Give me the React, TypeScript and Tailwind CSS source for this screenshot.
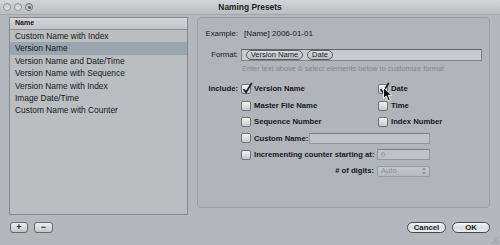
import React from "react"

const rows = [
  "Custom Name with Index",
  "Version Name",
  "Version Name and Date/Time",
  "Version Name with Sequence",
  "Version Name with Index",
  "Image Date/Time",
  "Custom Name with Counter",
]

function Check({ on, cursor }: { on?: boolean; cursor?: boolean }) {
  return (
    <span className="relative block w-[10px] h-[10px] shrink-0 rounded-[2px] border border-[#6f7377] bg-gradient-to-b from-[#f4f4f4] to-[#c6c8ca]">
      {on && (
        <svg className="absolute left-[0px] top-[-3px]" width="11" height="12" viewBox="0 0 11 12">
          <path d="M1.5 7.2 L4 10.2 L9.8 1" stroke="#1d1f22" strokeWidth="1.7" fill="none" />
        </svg>
      )}
      {cursor && (
        <svg className="absolute left-[4px] top-[2px]" width="10" height="15" viewBox="0 0 10 15">
          <path d="M0.5 0.5 L0.5 11.5 L3.2 9 L5.2 13.8 L7.2 12.9 L5.3 8.3 L8.8 8.3 Z" fill="#111" stroke="#fff" strokeWidth="0.9" />
        </svg>
      )}
    </span>
  )
}

function Pill({ children, w }: { children: React.ReactNode; w: string }) {
  return (
    <span className={`${w} h-[10px] flex items-center justify-center rounded-full border border-[#5d6064] bg-gradient-to-b from-[#dcdee0] to-[#b9bcbf] text-[7.6px] leading-none text-[#222]`}>
      {children}
    </span>
  )
}

export default function App() {
  return (
    <div className="relative w-[500px] h-[245px] overflow-hidden bg-[#b4b7bb] flex flex-col font-['Liberation_Sans',Arial,sans-serif] text-[#15171a]">
      {/* title bar */}
      <div className="h-[15px] flex items-center px-[3px] bg-gradient-to-b from-[#d3d5d7] to-[#babdc0] border-b border-[#a4a7aa]">
        <div className="w-[40px] flex gap-[3px]">
          <span className="w-[8px] h-[8px] rounded-full border border-[#8d9094] bg-gradient-to-b from-[#c9cbcd] to-[#e4e5e6]" />
          <span className="w-[8px] h-[8px] rounded-full border border-[#8d9094] bg-gradient-to-b from-[#c9cbcd] to-[#e4e5e6]" />
          <span className="w-[8px] h-[8px] rounded-full border border-[#6d7074] bg-gradient-to-b from-[#b9bbbd] to-[#dadbdc] flex items-center justify-center">
            <span className="w-[3px] h-[3px] rounded-full bg-[#555]" />
          </span>
        </div>
        <div className="flex-1 text-center text-[8.4px] font-bold text-[#1d1f22] leading-none">Naming Presets</div>
        <div className="w-[40px]" />
      </div>

      <div className="flex flex-1 pl-[9px] pt-[2px] gap-[9px]">
        {/* left column */}
        <div className="w-[179px] flex flex-col">
          <div className="h-[198px] border border-[#85888c] bg-[#bbbec1]">
            <div className="h-[12px] flex items-center pl-[5px] text-[7px] font-bold bg-gradient-to-b from-[#d4d6d8] to-[#c2c5c8] border-b border-[#8d9094]">
              Name
            </div>
            {rows.map((r, i) => (
              <div
                key={r}
                className={`h-[12.4px] flex items-center pl-[5px] text-[8.4px] leading-none ${i === 1 ? "bg-[#9aa5b0]" : ""}`}
              >
                {r}
              </div>
            ))}
          </div>
          <div className="mt-[7px] flex gap-[6px] pl-[1px]">
            <button className="w-[18px] h-[11px] rounded-[3px] border border-[#66696d] bg-gradient-to-b from-[#f0f0f0] to-[#c2c4c6] flex items-center justify-center text-[9px] font-bold leading-none text-[#222]">
              +
            </button>
            <button className="w-[19px] h-[11px] rounded-[3px] border border-[#66696d] bg-gradient-to-b from-[#f0f0f0] to-[#c2c4c6] flex items-center justify-center text-[9px] font-bold leading-none text-[#222]">
              −
            </button>
          </div>
        </div>

        {/* right column */}
        <div className="w-[293px] flex flex-col">
          <div className="h-[191px] rounded-[4px] border border-[#9b9fa3] bg-[#b1b5b9] flex flex-col pt-[10px] text-[8px] leading-none">
            <div className="h-[12px] flex items-center">
              <span className="w-[40px] text-right text-[7.8px]">Example:</span>
              <span className="ml-[6px]">[Name] 2006-01-01</span>
            </div>
            <div className="mt-[9px] h-[12px] flex items-center">
              <span className="w-[40px] text-right text-[7.8px]">Format:</span>
              <div className="ml-[3px] w-[241px] h-[12px] border border-[#7e8286] border-t-[#606367] bg-[#c8cbce] flex items-center pl-[4px] gap-[4px]">
                <Pill w="w-[57px]">Version Name</Pill>
                <Pill w="w-[26px]">Date</Pill>
              </div>
            </div>
            <div className="mt-[3px] h-[10px] flex items-center pl-[44px] text-[7.4px] text-[#85898d]">
              Enter text above &amp; select elements below to customize format
            </div>

            <div className="mt-[7px] flex flex-col font-bold text-[7.7px]">
              <div className="h-[16.4px] flex items-center">
                <span className="w-[40px] text-right">Include:</span>
                <div className="ml-[3px] w-[137px] flex items-center gap-[3px]">
                  <Check on />
                  <span>Version Name</span>
                </div>
                <div className="flex items-center gap-[3px]">
                  <Check on cursor />
                  <span>Date</span>
                </div>
              </div>
              <div className="h-[16.4px] flex items-center">
                <span className="w-[40px]" />
                <div className="ml-[3px] w-[137px] flex items-center gap-[3px]">
                  <Check />
                  <span>Master File Name</span>
                </div>
                <div className="flex items-center gap-[3px]">
                  <Check />
                  <span>Time</span>
                </div>
              </div>
              <div className="h-[16.4px] flex items-center">
                <span className="w-[40px]" />
                <div className="ml-[3px] w-[137px] flex items-center gap-[3px]">
                  <Check />
                  <span>Sequence Number</span>
                </div>
                <div className="flex items-center gap-[3px]">
                  <Check />
                  <span>Index Number</span>
                </div>
              </div>
              <div className="h-[16.4px] flex items-center">
                <span className="w-[40px]" />
                <div className="ml-[3px] w-[68px] flex items-center gap-[3px]">
                  <Check />
                  <span>Custom Name:</span>
                </div>
                <div className="w-[121px] h-[11px] border border-[#94989c] border-t-[#7a7e82] bg-[#bfc2c5]" />
              </div>
              <div className="h-[16.4px] flex items-center">
                <span className="w-[40px]" />
                <div className="ml-[3px] w-[136px] flex items-center gap-[3px]">
                  <Check />
                  <span>Incrementing counter starting at:</span>
                </div>
                <div className="w-[53px] h-[11px] border border-[#94989c] border-t-[#7a7e82] bg-[#bfc2c5] flex items-center pl-[3px] font-normal text-[7.6px] text-[#8a8e92]">
                  0
                </div>
              </div>
              <div className="h-[16.4px] flex items-center">
                <span className="w-[176px] text-right">#  of digits:</span>
                <div className="ml-[3px] w-[53px] h-[11px] rounded-[2px] border border-[#989ca0] bg-gradient-to-b from-[#c6c9cc] to-[#b6b9bc] flex items-center pl-[3px] pr-[3px] font-normal text-[7.6px] text-[#8a8e92]">
                  <span className="flex-1">Auto</span>
                  <svg width="4" height="8" viewBox="0 0 4 8">
                    <path d="M0 3 L2 0.5 L4 3 Z M0 5 L2 7.5 L4 5 Z" fill="#8a8e92" />
                  </svg>
                </div>
              </div>
            </div>
          </div>

          <div className="mt-[14px] flex justify-end gap-[6px]">
            <button className="w-[39px] h-[11px] rounded-full border border-[#44474b] bg-gradient-to-b from-[#f6f6f6] via-[#dadcde] to-[#eeeeee] flex items-center justify-center text-[7.8px] font-bold leading-none text-[#1a1c1f]">
              Cancel
            </button>
            <button className="w-[38px] h-[11px] rounded-full border border-[#44474b] bg-gradient-to-b from-[#f6f6f6] via-[#dadcde] to-[#eeeeee] flex items-center justify-center text-[7.8px] font-bold leading-none text-[#1a1c1f]">
              OK
            </button>
          </div>
        </div>
      </div>

      {/* resize grip */}
      <svg className="absolute right-[1px] bottom-[1px]" width="8" height="8" viewBox="0 0 8 8">
        <path d="M7.5 1 L1 7.5 M7.5 4 L4 7.5 M7.5 6.5 L6.5 7.5" stroke="#8a8d90" strokeWidth="0.8" />
      </svg>
    </div>
  )
}
